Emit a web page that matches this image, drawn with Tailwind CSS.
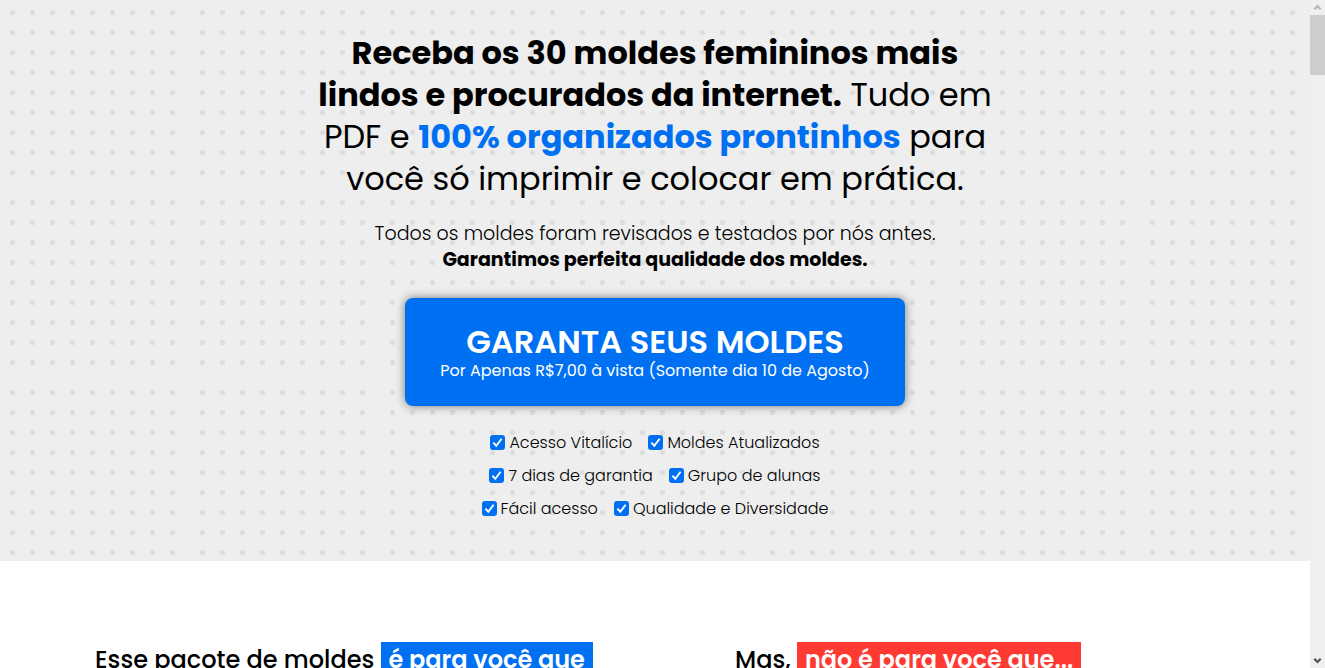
<!DOCTYPE html>
<html lang="pt-BR">
<head>
<meta charset="utf-8">
<meta name="viewport" content="width=device-width, initial-scale=1">
<title>30 moldes femininos</title>
<script src="https://cdn.jsdelivr.net/npm/@tailwindcss/browser@4"></script>
</head>
<body class="flex h-screen overflow-hidden bg-white font-[Poppins,Inter,sans-serif] text-black">
  <svg class="hidden" aria-hidden="true">
    <symbol id="tick" viewBox="0 0 15 15"><path d="M3.4 7.6 6.3 10.8 11.6 3.8" fill="none" stroke="#fff" stroke-width="1.9"/></symbol>
  </svg>
  <main class="min-w-0 flex-1 overflow-hidden">
    <section class="relative isolate flex flex-col items-center bg-[#eeeeee] px-4 pt-8 pb-9 text-center">
      <svg class="absolute inset-0 -z-10 h-full w-full" aria-hidden="true">
        <defs>
          <pattern id="dot" width="20" height="20" patternUnits="userSpaceOnUse"><circle cx="12.5" cy="12.5" r="2.6" fill="#dddddd"/></pattern>
          <pattern id="dots" width="190" height="190" patternUnits="userSpaceOnUse"><rect width="180" height="180" fill="url(#dot)"/></pattern>
        </defs>
        <rect width="100%" height="100%" fill="url(#dots)"/>
      </svg>
      <h1 class="text-[32px] leading-[42px] whitespace-nowrap"><strong class="font-bold">Receba os 30 moldes femininos mais<br>lindos e procurados da internet.</strong> Tudo em<br>PDF e <strong class="font-bold text-[#0070f3]">100% organizados prontinhos</strong> para<br>você só imprimir e colocar em prática.</h1>
      <p class="mt-[21px] text-[19px] leading-[26px] font-light">Todos os moldes foram revisados e testados por nós antes.<br><strong class="font-bold">Garantimos perfeita qualidade dos moldes.</strong></p>
      <button type="button" class="mt-[25px] flex h-[108px] w-full max-w-[500px] flex-col items-center justify-center rounded-lg bg-[#0070f3] text-white shadow-[0_0_10px_rgba(0,0,0,0.5)]">
        <span class="text-[32px] leading-[38px] font-semibold">GARANTA SEUS MOLDES</span>
        <span class="text-base leading-5">Por Apenas R$7,00 à vista (Somente dia 10 de Agosto)</span>
      </button>
      <div class="mt-5 flex flex-col items-center text-base leading-[33px] font-light">
        <div class="flex gap-4">
          <label class="flex items-center gap-1"><span class="grid size-[15px]"><input type="checkbox" checked class="col-start-1 row-start-1 size-[15px] appearance-none rounded-[3px] bg-[#0070f3]"><svg class="pointer-events-none col-start-1 row-start-1 size-[15px]"><use href="#tick"/></svg></span>Acesso Vitalício</label>
          <label class="flex items-center gap-1"><span class="grid size-[15px]"><input type="checkbox" checked class="col-start-1 row-start-1 size-[15px] appearance-none rounded-[3px] bg-[#0070f3]"><svg class="pointer-events-none col-start-1 row-start-1 size-[15px]"><use href="#tick"/></svg></span>Moldes Atualizados</label>
        </div>
        <div class="flex gap-4">
          <label class="flex items-center gap-1"><span class="grid size-[15px]"><input type="checkbox" checked class="col-start-1 row-start-1 size-[15px] appearance-none rounded-[3px] bg-[#0070f3]"><svg class="pointer-events-none col-start-1 row-start-1 size-[15px]"><use href="#tick"/></svg></span>7 dias de garantia</label>
          <label class="flex items-center gap-1"><span class="grid size-[15px]"><input type="checkbox" checked class="col-start-1 row-start-1 size-[15px] appearance-none rounded-[3px] bg-[#0070f3]"><svg class="pointer-events-none col-start-1 row-start-1 size-[15px]"><use href="#tick"/></svg></span>Grupo de alunas</label>
        </div>
        <div class="flex gap-4">
          <label class="flex items-center gap-1"><span class="grid size-[15px]"><input type="checkbox" checked class="col-start-1 row-start-1 size-[15px] appearance-none rounded-[3px] bg-[#0070f3]"><svg class="pointer-events-none col-start-1 row-start-1 size-[15px]"><use href="#tick"/></svg></span>Fácil acesso</label>
          <label class="flex items-center gap-1"><span class="grid size-[15px]"><input type="checkbox" checked class="col-start-1 row-start-1 size-[15px] appearance-none rounded-[3px] bg-[#0070f3]"><svg class="pointer-events-none col-start-1 row-start-1 size-[15px]"><use href="#tick"/></svg></span>Qualidade e Diversidade</label>
        </div>
      </div>
    </section>
    <section class="mx-auto grid max-w-[1280px] grid-cols-2 pt-[81px] text-2xl leading-9 font-medium">
      <h2 class="pl-20 whitespace-nowrap">Esse pacote de moldes <span class="inline-block bg-[#0070f3] px-2 font-semibold text-white">é para você que</span></h2>
      <h2 class="pl-20 whitespace-nowrap">Mas, <span class="inline-block bg-[#ff3a33] px-2 font-semibold text-white">não é para você que...</span></h2>
    </section>
  </main>
  <div class="flex w-[15px] shrink-0 flex-col bg-[#f0f0f0]" aria-hidden="true">
    <svg class="size-[15px]" viewBox="0 0 15 15"><path d="M4.3 9.2 7.5 6 10.7 9.2" fill="none" stroke="#b5b5b5" stroke-width="2.2"/></svg>
    <div class="h-[60px] bg-[#cdcdcd]"></div>
    <svg class="mt-auto size-[15px]" viewBox="0 0 15 15"><path d="M4.3 5.8 7.5 9 10.7 5.8" fill="none" stroke="#505050" stroke-width="2.2"/></svg>
  </div>
</body>
</html>
